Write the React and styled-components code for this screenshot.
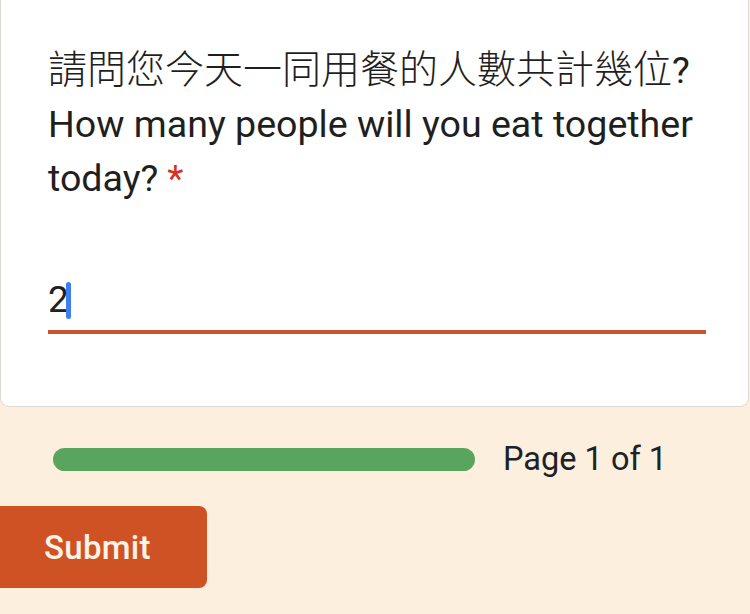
import React from 'react';
import styled, { createGlobalStyle } from 'styled-components';

const GlobalStyle = createGlobalStyle`
  html, body {
    margin: 0;
    padding: 0;
    background: #fcefdd;
  }
  body {
    font-family: Roboto, "Noto Sans CJK TC", sans-serif;
    color: #202124;
    overflow: hidden;
  }
`;

const Page = styled.div`
  width: 750px;
  height: 614px;
  background: #fcefdd;
  overflow: hidden;
`;

const Card = styled.div`
  width: 749px;
  box-sizing: border-box;
  background: #fff;
  border: 1px solid #dcd8d2;
  border-top: none;
  border-radius: 0 0 9px 9px;
  padding: 43px 45px 72px 47px;
`;

const Question = styled.div`
  font-size: 37.6px;
  font-weight: 400;
  line-height: 54px;
  color: #1f1f1f;
`;

const Chinese = styled.span`
  font-size: 39px;
  font-weight: 300;
`;

const Required = styled.span`
  color: #d93025;
  margin-left: 9px;
`;

const Field = styled.div`
  margin-top: 68px;
  width: 658px;
  border-bottom: 4px solid #c8562e;
  padding-bottom: 3px;
`;

const Value = styled.div`
  font-size: 37px;
  line-height: 54px;
  display: flex;
  align-items: center;
`;

const Caret = styled.span`
  display: inline-block;
  width: 5px;
  height: 37px;
  margin-left: -3px;
  border-radius: 3px;
  background: #3b7ff0;
`;

const Progress = styled.div`
  display: flex;
  align-items: center;
  gap: 28px;
  margin: 37px 0 0 53px;
`;

const Track = styled.div`
  width: 422px;
  height: 23px;
  border-radius: 12px;
  background: #5aa55d;
`;

const PageLabel = styled.span`
  font-size: 32.5px;
  line-height: 30px;
  color: #202124;
`;

const SubmitButton = styled.button`
  display: block;
  margin: 32px 0 0 -12px;
  width: 219px;
  height: 82px;
  padding: 0 0 0 56px;
  text-align: left;
  border: none;
  border-radius: 8px;
  background: #cf5224;
  color: #fdf3e7;
  font-family: Roboto, sans-serif;
  font-size: 33px;
  font-weight: 500;
  letter-spacing: 0.3px;
`;

export default function App() {
  return (
    <Page>
      <GlobalStyle />
      <Card>
        <Question>
          <Chinese>請問您今天一同用餐的人數共計幾位</Chinese>?
          <br />
          How many people will you eat together today?
          <Required>*</Required>
        </Question>
        <Field>
          <Value>
            2<Caret />
          </Value>
        </Field>
      </Card>
      <Progress>
        <Track />
        <PageLabel>Page 1 of 1</PageLabel>
      </Progress>
      <SubmitButton>Submit</SubmitButton>
    </Page>
  );
}
